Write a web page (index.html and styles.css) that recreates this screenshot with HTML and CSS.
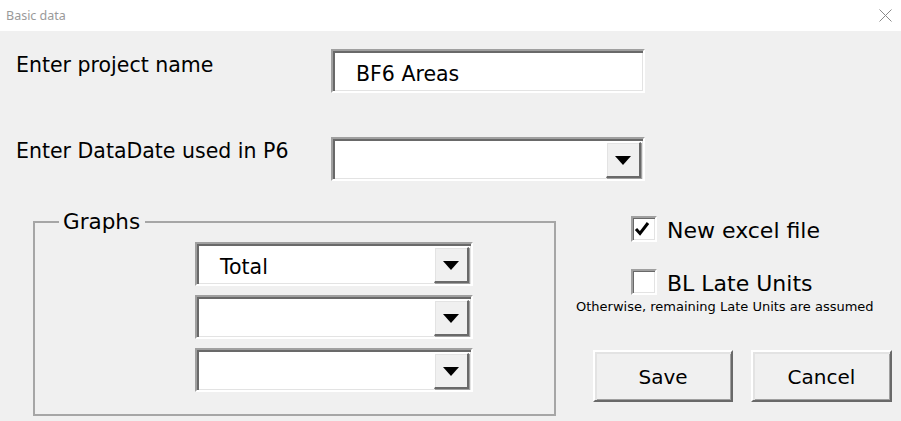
FILE: index.html
```html
<!DOCTYPE html>
<html lang="en">
<head>
<meta charset="utf-8">
<title>Basic data</title>
<link rel="stylesheet" href="styles.css">
</head>
<body>
<div class="window">
  <header class="titlebar">
    <span class="title">Basic data</span>
    <svg class="close" width="13" height="13" viewBox="0 0 13 13" aria-hidden="true">
      <path d="M0.5 0.5L12.5 12.5M12.5 0.5L0.5 12.5" stroke="#8a8a8a" stroke-width="1" fill="none"/>
    </svg>
  </header>

  <main class="form">
    <div class="row row-name">
      <label class="lbl">Enter project name</label>
      <div class="field textbox">BF6 Areas</div>
    </div>

    <div class="row row-date">
      <label class="lbl">Enter DataDate used in P6</label>
      <div class="field combo wide">
        <span class="value"></span>
        <span class="drop"><i class="arrow"></i></span>
      </div>
    </div>

    <div class="lower">
      <fieldset class="frame">
        <legend>Graphs</legend>
        <div class="combos">
          <div class="field combo">
            <span class="value">Total</span>
            <span class="drop"><i class="arrow"></i></span>
          </div>
          <div class="field combo">
            <span class="value"></span>
            <span class="drop"><i class="arrow"></i></span>
          </div>
          <div class="field combo">
            <span class="value"></span>
            <span class="drop"><i class="arrow"></i></span>
          </div>
        </div>
      </fieldset>

      <div class="side">
        <div class="check">
          <span class="box">
            <svg width="22" height="22" viewBox="0 0 22 22" aria-hidden="true">
              <polyline points="3,11 7,15.5 15,5" fill="none" stroke="#000" stroke-width="3"/>
            </svg>
          </span>
          <span class="check-label">New excel file</span>
        </div>
        <div class="check second">
          <span class="box"></span>
          <span class="check-label">BL Late Units</span>
        </div>
        <p class="note">Otherwise, remaining Late Units are assumed</p>
        <div class="buttons">
          <button class="btn save">Save</button>
          <button class="btn cancel">Cancel</button>
        </div>
      </div>
    </div>
  </main>
</div>
</body>
</html>
```

FILE: styles.css
```css
html, body {
  margin: 0;
  padding: 0;
}

body {
  width: 901px;
  height: 421px;
  overflow: hidden;
  background: #f0f0f0;
  color: #000;
  font-family: "DejaVu Sans", Tahoma, sans-serif;
}

/* window caption */
.titlebar {
  box-sizing: border-box;
  height: 31px;
  background: #fff;
  display: flex;
  align-items: center;
  justify-content: space-between;
  padding: 0 9px 0 6px;
}

.title {
  font: 12.5px "Noto Sans", "Open Sans", sans-serif;
  color: #9a9a9a;
}

.close {
  display: block;
}

/* form body */
.form {
  padding-left: 16px;
}

.row {
  display: flex;
  align-items: flex-start;
}

.row-name {
  margin-top: 18px;
}

.row-date {
  margin-top: 44px;
}

.lbl {
  width: 315px;
  font-size: 20.5px;
  line-height: 24px;
}

.row-name .lbl {
  padding-top: 4px;
}

.row-date .lbl {
  padding-top: 2px;
}

/* sunken edit / combo boxes */
.field {
  box-sizing: border-box;
  height: 44px;
  background: #fff;
  border-style: solid;
  border-width: 2px;
  border-color: #a0a0a0 #fff #fff #a0a0a0;
  box-shadow: inset 2px 2px 0 #696969, inset -1px -1px 0 #e3e3e3;
  font-size: 20.5px;
  line-height: 24px;
}

.textbox {
  width: 314px;
  padding: 11px 0 0 23px;
}

.combo {
  display: flex;
  width: 278px;
}

.combo.wide {
  width: 314px;
}

.combo .value {
  flex: 1;
  padding: 11px 0 0 23px;
}

.drop {
  box-sizing: border-box;
  width: 35px;
  height: 36px;
  margin: 3px 2px 0 0;
  background: #f0f0f0;
  border-style: solid;
  border-width: 1px 2px 2px 1px;
  border-color: #fff #696969 #696969 #fff;
  box-shadow: inset 1px 1px 0 #e3e3e3, 1px 1px 0 #a0a0a0;
  display: flex;
  align-items: center;
  justify-content: center;
}

.arrow {
  display: block;
  width: 0;
  height: 0;
  border-left: 8px solid transparent;
  border-right: 8px solid transparent;
  border-top: 9px solid #000;
  margin-top: 1px;
}

/* lower area: frame + options */
.lower {
  display: flex;
  align-items: flex-start;
  margin-top: 29px;
}

.frame {
  box-sizing: border-box;
  width: 523px;
  margin: 0 0 0 17px;
  padding: 8px 0 22px 0;
  border: 2px solid #a6a6a6;
  min-width: 0;
}

.frame legend {
  margin-left: 24px;
  padding: 0 5px 0 4px;
  font-size: 21.5px;
  line-height: 24px;
}

.combos {
  display: flex;
  flex-direction: column;
  gap: 9px;
  margin-left: 160px;
}

.side {
  margin-left: 20px;
  padding-top: 6px;
}

.check {
  display: flex;
  align-items: flex-start;
  padding-left: 55px;
}

.check.second {
  margin-top: 25px;
}

.box {
  box-sizing: border-box;
  width: 26px;
  height: 26px;
  background: #fff;
  border-style: solid;
  border-width: 2px;
  border-color: #a0a0a0 #fff #fff #a0a0a0;
  box-shadow: inset 1px 1px 0 #696969, inset -1px -1px 0 #e3e3e3;
}

.box svg {
  display: block;
}

.check-label {
  margin: 2px 0 0 10px;
  font-size: 22px;
  line-height: 26px;
}

.note {
  margin: 2px 0 0 0;
  font-size: 13px;
  line-height: 16px;
}

.buttons {
  display: flex;
  gap: 18px;
  margin-top: 35px;
  padding-left: 17px;
}

.btn {
  box-sizing: border-box;
  height: 52px;
  padding: 2px 0 0 0;
  background: #f0f0f0;
  border-style: solid;
  border-width: 2px;
  border-color: #fff #696969 #696969 #fff;
  box-shadow: inset 2px 2px 0 #e3e3e3, inset -1px -1px 0 #a0a0a0;
  font-family: "DejaVu Sans", Tahoma, sans-serif;
  font-size: 20px;
  line-height: 24px;
  color: #000;
}

.save {
  width: 140px;
}

.cancel {
  width: 141px;
}
```
